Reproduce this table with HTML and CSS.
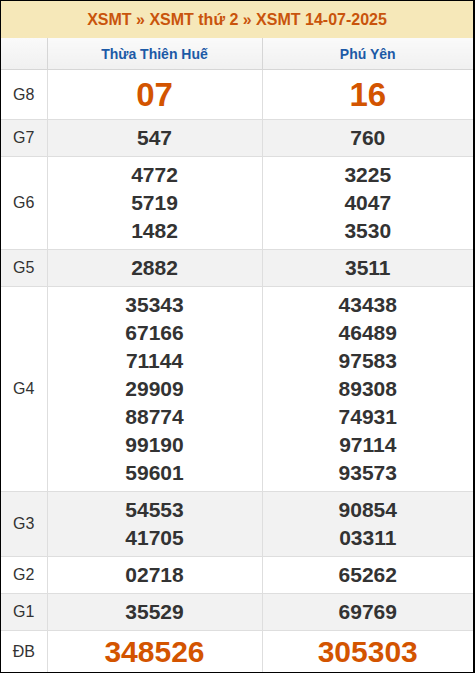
FILE: index.html
```html
<!DOCTYPE html>
<html lang="vi">
<head>
<meta charset="utf-8">
<title>XSMT 14-07-2025</title>
<link rel="stylesheet" href="styles.css">
</head>
<body>
<div class="box">
  <div class="title"><span>XSMT</span> » <span>XSMT thứ 2</span> » <span>XSMT 14-07-2025</span></div>
  <table class="kq">
    <colgroup><col class="c-label"><col class="c-prov1"><col class="c-prov2"></colgroup>
    <thead>
      <tr><th></th><th>Thừa Thiên Huế</th><th>Phú Yên</th></tr>
    </thead>
    <tbody>
      <tr class="g8"><td class="lb">G8</td><td>07</td><td>16</td></tr>
      <tr class="alt"><td class="lb">G7</td><td>547</td><td>760</td></tr>
      <tr><td class="lb">G6</td><td>4772<br>5719<br>1482</td><td>3225<br>4047<br>3530</td></tr>
      <tr class="alt"><td class="lb">G5</td><td>2882</td><td>3511</td></tr>
      <tr><td class="lb">G4</td><td>35343<br>67166<br>71144<br>29909<br>88774<br>99190<br>59601</td><td>43438<br>46489<br>97583<br>89308<br>74931<br>97114<br>93573</td></tr>
      <tr class="alt"><td class="lb">G3</td><td>54553<br>41705</td><td>90854<br>03311</td></tr>
      <tr><td class="lb">G2</td><td>02718</td><td>65262</td></tr>
      <tr class="alt"><td class="lb">G1</td><td>35529</td><td>69769</td></tr>
      <tr class="db"><td class="lb">ĐB</td><td>348526</td><td>305303</td></tr>
    </tbody>
  </table>
</div>
</body>
</html>
```

FILE: styles.css
```css
html, body {
  margin: 0;
  padding: 0;
  background: #fff;
}
body {
  font-family: Arial, "Liberation Sans", sans-serif;
}
.box {
  width: 475px;
  height: 673px;
  box-sizing: border-box;
  border: 1px solid #000;
  border-right-width: 2px;
  overflow: hidden;
}
.title {
  height: 37px;
  background: #f6e8b9;
  color: #c9540c;
  font-size: 16px;
  font-weight: bold;
  text-align: center;
  line-height: 37px;
}
.kq {
  width: 100%;
  border-collapse: collapse;
  table-layout: fixed;
}
.c-label { width: 46px; }
.c-prov1 { width: 215px; }
.kq th {
  height: 31px;
  padding: 0;
  background: linear-gradient(#fafafa, #f0f0f0);
  color: #1c5aa6;
  font-size: 14px;
  font-weight: bold;
  border: 1px solid #d6d6d6;
  border-top: none;
}
.kq th:first-child { border-left: none; }
.kq th:last-child { border-right: none; }
.kq td {
  padding: 4px 0;
  border: 1px solid #dedede;
  text-align: center;
  color: #333;
  font-size: 21px;
  font-weight: bold;
  line-height: 28px;
}
.kq td:first-child { border-left: none; }
.kq td:last-child { border-right: none; }
.kq td.lb {
  font-size: 16px;
  font-weight: normal;
  color: #333;
}
.kq tr.alt td { background: #f2f2f2; }
.kq tr.g8 td {
  font-size: 33px;
  line-height: 41px;
  color: #d35400;
}
.kq tr.db td {
  font-size: 30px;
  line-height: 33px;
  color: #d35400;
  border-bottom: none;
}
.kq tr.g8 td.lb, .kq tr.db td.lb {
  font-size: 16px;
  color: #333;
}
```
